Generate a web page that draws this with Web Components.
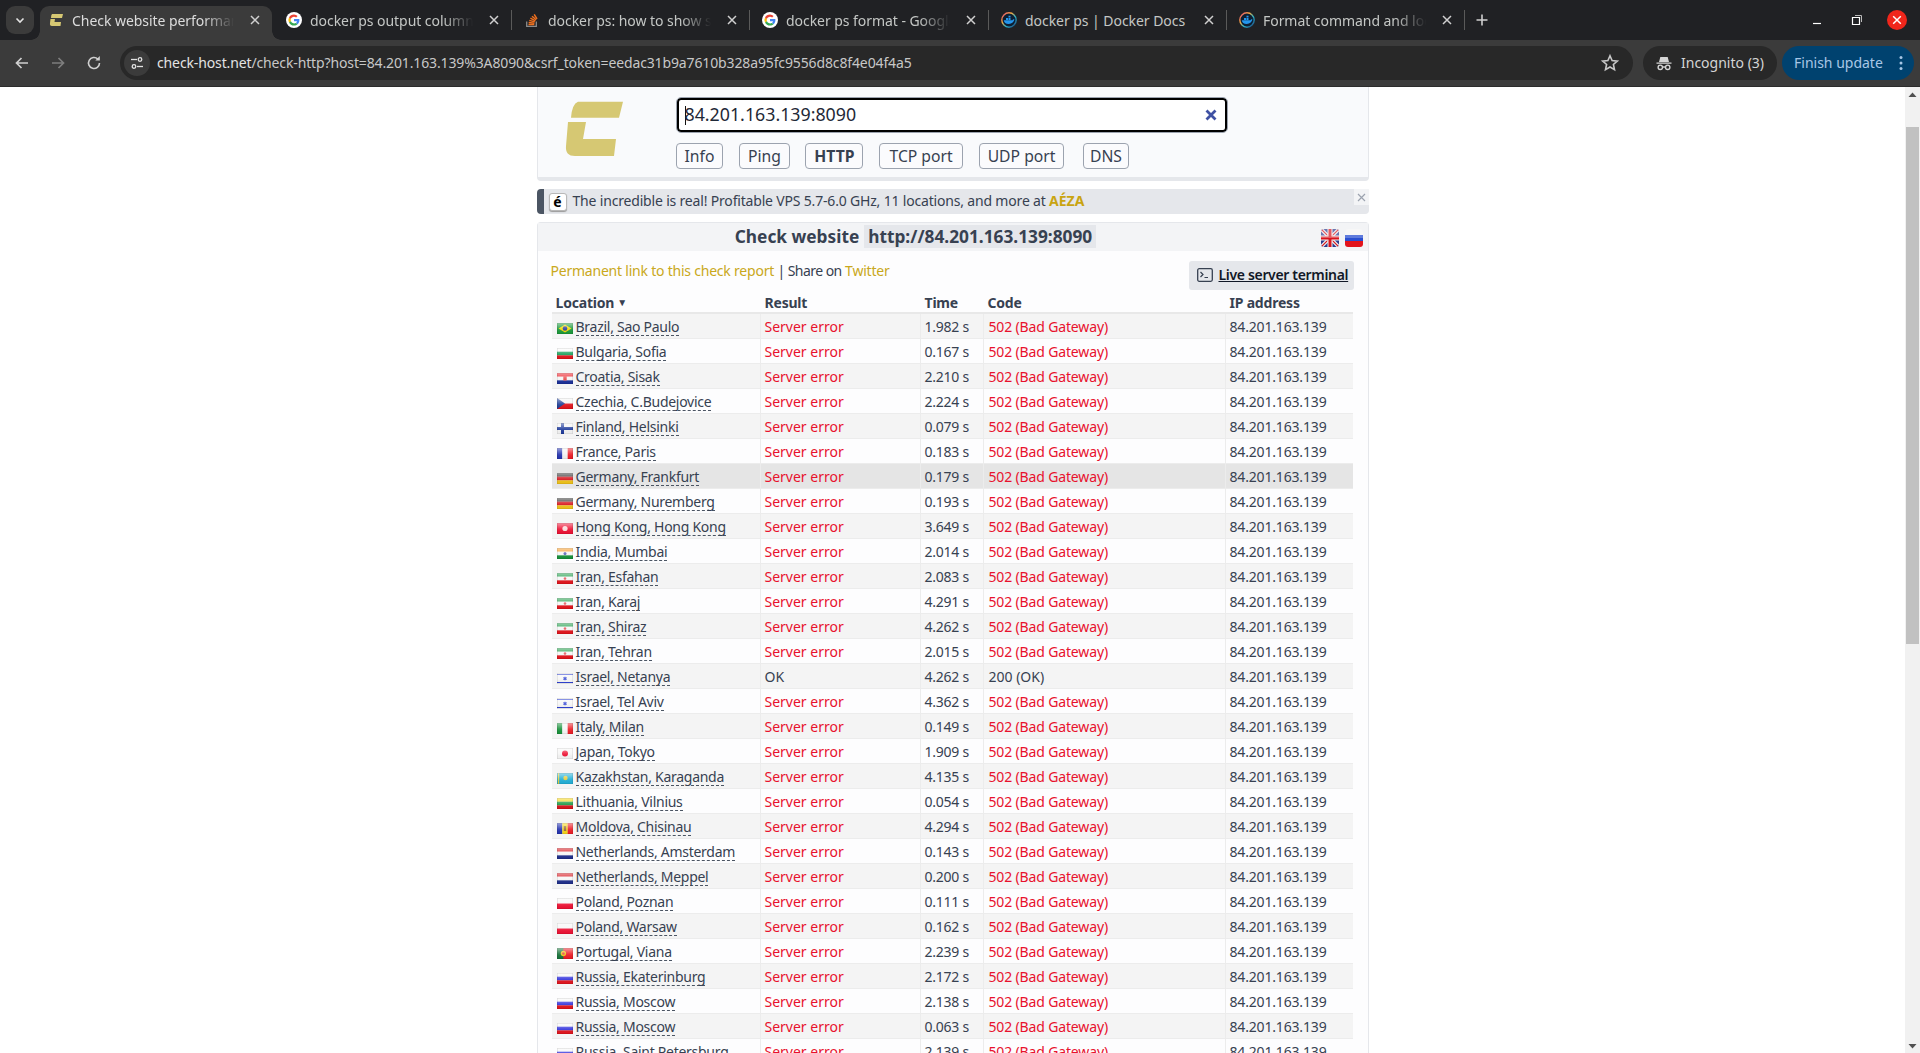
<!DOCTYPE html>
<html>
<head>
<meta charset="utf-8">
<title>Check website performance</title>
<style>
    html, body { margin: 0; height: 100%; overflow: hidden; background: #fff; }
    body { display: flex; flex-direction: column; font-family: "Noto Sans", "Open Sans", sans-serif; }
    .page { flex: 1; display: flex; min-height: 0; }
    .viewport { flex: 1; min-width: 0; overflow: hidden; display: flex; flex-direction: column; align-items: center; }
    .column { width: 832px; display: flex; flex-direction: column; flex: none; }
</style>
</head>
<body>
<browser-chrome></browser-chrome>
<div class="page">
    <div class="viewport">
        <div class="column">
            <check-form></check-form>
            <promo-banner></promo-banner>
            <check-results></check-results>
        </div>
    </div>
    <page-scrollbar></page-scrollbar>
</div>

<script>
const LOGO_PATH = "M23 0.7H68L64 16.7H16Q17 3 23 0.7Z M13 21H31L28 38H61L59 55H20Q10 55 11 45Z";

const FAVICONS = {
    check: `<svg width="16" height="16" viewBox="0 0 16 16"><path fill="#d6c873" d="M4 2H15L14 6H3Q3 3 4 2ZM2.500 7H7L6.500 10H13L12.500 14H4Q1.500 14 2 11Z"/></svg>`,
    google: `<svg width="16" height="16" viewBox="0 0 16 16"><circle cx="8" cy="8" r="8" fill="#fff"/><path fill="#4285f4" d="M13.400 8.200c0-.4 0-.8-.1-1.100H8v2.100h3a2.600 2.600 0 0 1-1.100 1.700l1.700 1.300c1.100-.9 1.800-2.300 1.800-4z"/><path fill="#34a853" d="M8 13.500c1.500 0 2.700-.5 3.600-1.300l-1.700-1.300c-.5.300-1.100.5-1.900.5-1.400 0-2.700-1-3.100-2.300L3 10.400c.9 1.900 2.800 3.100 5 3.100z"/><path fill="#fbbc05" d="M4.900 9.100a3.300 3.300 0 0 1 0-2.200L3 5.600a5.500 5.500 0 0 0 0 4.800z"/><path fill="#ea4335" d="M8 4.700c.8 0 1.500.3 2.100.8l1.500-1.500A5.400 5.400 0 0 0 8 2.500c-2.200 0-4.100 1.200-5 3.100l1.900 1.300C5.300 5.700 6.600 4.700 8 4.700z"/></svg>`,
    so: `<svg width="16" height="16" viewBox="0 0 16 16"><path fill="none" stroke="#8c8c8c" stroke-width="1.300" d="M2.700 9.500V14.300H12.300V9.500"/><g fill="none" stroke="#f0701e" stroke-width="1.500"><path d="M4.500 12.500H10.300"/><path d="M4.700 10.500L10.400 11.200"/><path d="M5.300 8.400L10.800 9.900"/><path d="M6.400 6.200L11.400 8.900"/><path d="M8 4.200L12.200 7.800"/><path d="M10.200 2.300L13 6.800"/></g></svg>`,
    docker: `<svg width="16" height="16" viewBox="0 0 16 16"><defs><linearGradient id="ring" x1="0" y1="0" x2="1" y2="1"><stop offset="0" stop-color="#e0457b"/><stop offset=".35" stop-color="#f0a63c"/><stop offset=".6" stop-color="#2cb5c9"/><stop offset="1" stop-color="#1a3d7a"/></linearGradient></defs><circle cx="8" cy="8" r="7.200" fill="#0d1f33" stroke="url(#ring)" stroke-width="1.400"/><path fill="#2496ed" d="M2.800 8.300H11.500C11.800 7.300 12.400 7 13.300 7.300C13 9.800 11 12 7.700 12C4.700 12 3 10.500 2.800 8.300ZM5 6H7V8H5ZM7.500 6H9.500V8H7.500ZM7.500 3.700H9.500V5.500H7.500Z"/></svg>`
};

const TABS = [
    { title: "Check website performance and", icon: "check", active: true, width: 232 },
    { title: "docker ps output columns", icon: "google", width: 238 },
    { title: "docker ps: how to show s", icon: "so", width: 238 },
    { title: "docker ps format - Google", icon: "google", width: 239 },
    { title: "docker ps | Docker Docs", icon: "docker", width: 238, nofade: true },
    { title: "Format command and log", icon: "docker", width: 238 },
];

class BrowserTab extends HTMLElement {
    connectedCallback() {
        const active = this.hasAttribute('active');
        this.attachShadow({ mode: 'open' }).innerHTML = `
        <style>
            :host {
                display: flex;
                align-items: center;
                flex: none;
                height: 34px;
                box-sizing: border-box;
                padding: 0 ${active ? 7 : 8}px 6px ${active ? 8 : 12}px;
                color: ${active ? '#dcdcdc' : '#c4c7c5'};
                font-size: 14px;
                position: relative;
                ${active ? 'background: #3b3b3b; border-radius: 9px 9px 0 0; margin-right: 2px;' : ''}
            }
            .icon { width: 16px; height: 16px; flex: none; margin: 0 8px 0 0; }
            .title {
                flex: 1;
                min-width: 0;
                white-space: nowrap;
                overflow: hidden;
                letter-spacing: -.05px;
                ${this.hasAttribute('nofade') ? '' : `-webkit-mask-image: linear-gradient(90deg, #000 78%, transparent 96%);`}
            }
            .close { flex: none; width: 20px; height: 20px; margin-left: 4px; }
            .sep { position: absolute; right: 0; top: 4px; width: 1px; height: 20px; background: #5a5a5a; display: ${this.hasAttribute('nosep') ? 'none' : 'block'}; }
            .flare { position: absolute; bottom: 0; width: 9px; height: 9px; display: ${active ? 'block' : 'none'}; }
            .flare.l { left: -9px; background: radial-gradient(circle at 0 0, transparent 8.500px, #3b3b3b 9px); }
            .flare.r { right: -9px; background: radial-gradient(circle at 100% 0, transparent 8.500px, #3b3b3b 9px); }
        </style>
        <div class="icon"><slot name="icon"></slot></div>
        <div class="title"><slot></slot></div>
        <svg class="close" viewBox="0 0 20 20"><path d="M6 6L14 14M14 6L6 14" stroke="#d0d0d0" stroke-width="1.500" fill="none"/></svg>
        <div class="sep"></div>
        <div class="flare l"></div>
        <div class="flare r"></div>`;
    }
}
customElements.define('browser-tab', BrowserTab);

class BrowserChrome extends HTMLElement {
    connectedCallback() {
        const tabs = TABS.map((t) => `
            <browser-tab style="width:${t.width}px" ${t.active ? 'active nosep' : ''} ${t.nofade ? 'nofade' : ''}>
                <span slot="icon">${FAVICONS[t.icon]}</span>${t.title}
            </browser-tab>`).join('');

        this.attachShadow({ mode: 'open' }).innerHTML = `
        <style>
            :host { display: block; flex: none; font-family: "Noto Sans", sans-serif; }
            .strip { height: 40px; background: #202124; display: flex; align-items: flex-end; padding-left: 6px; box-sizing: border-box; }
            .search {
                width: 28px; height: 28px; border-radius: 9px; background: #3b3b3b;
                display: flex; align-items: center; justify-content: center;
                align-self: flex-start; margin: 6px 6px 0 0; flex: none;
            }
            .tabs { display: flex; align-items: flex-end; flex: none; }
            .plus { width: 20px; height: 20px; margin: 0 0 10px 7px; flex: none; }
            .winctl { margin-left: auto; display: flex; align-items: center; align-self: flex-start; height: 40px; padding-right: 13px; }
            .winctl > * { flex: none; }
            .btn-gap1 { margin-right: 28px; }
            .btn-gap2 { margin-right: 24px; }
            .toolbar { height: 46px; background: #3b3b3b; border-bottom: 1px solid #2c2c2c; display: flex; align-items: center; padding: 0 6px 0 12px; }
            .nav { width: 20px; height: 20px; flex: none; }
            .omni {
                margin-left: 16px;
                width: 1513px; height: 34px; border-radius: 17px; background: #282828;
                display: flex; align-items: center; flex: none; color: #e3e3e3; font-size: 14px;
            }
            .tune { width: 26px; height: 26px; border-radius: 50%; background: #3b3b3b; margin-left: 4px; margin-right: 7px; display: flex; align-items: center; justify-content: center; flex: none; }
            .url { flex: 1; white-space: nowrap; letter-spacing: -.13px; padding-bottom: 2px; }
            .url span { color: #c7c7c7; }
            .star { width: 20px; height: 20px; margin-right: 13px; flex: none; }
            .pill { height: 34px; border-radius: 17px; display: flex; align-items: center; font-size: 14px; box-sizing: border-box; flex: none; }
            .pill span { padding-bottom: 2px; }
            .incog { background: #282828; color: #d4d4d4; margin-left: 10px; width: 134px; padding-left: 12px; gap: 8px; }
            .update { background: #00426f; color: #a8c7e6; margin-left: 5px; width: 132px; padding-left: 12px; }
            .dots { margin-left: auto; margin-right: 11px; }
        </style>
        <div class="strip">
            <div class="search"><svg width="14" height="14" viewBox="0 0 14 14"><path d="M3.500 5.500L7 9L10.500 5.500" stroke="#e3e3e3" stroke-width="1.600" fill="none"/></svg></div>
            <div class="tabs">${tabs}</div>
            <svg class="plus" viewBox="0 0 20 20"><path d="M10 4.500V15.500M4.500 10H15.500" stroke="#cfcfcf" stroke-width="1.600"/></svg>
            <div class="winctl">
                <svg class="btn-gap1" width="12" height="12" viewBox="0 0 12 12"><path d="M2 9.500H10" stroke="#fff" stroke-width="1.200"/></svg>
                <svg class="btn-gap2" width="12" height="12" viewBox="0 0 12 12"><path d="M1.500 3.500H8.500V10.500H1.500Z" fill="none" stroke="#fff" stroke-width="1.200"/><path d="M4 1.500H10.500V8" fill="none" stroke="#bbb" stroke-width="1"/></svg>
                <svg width="20" height="20" viewBox="0 0 20 20"><circle cx="10" cy="10" r="10" fill="#f0261b"/><path d="M6.200 6.200L13.800 13.800M13.800 6.200L6.200 13.800" stroke="#fff" stroke-width="1.500"/></svg>
            </div>
        </div>
        <div class="toolbar">
            <svg class="nav" viewBox="0 0 20 20"><path d="M16 10H4.500M9.500 5L4.500 10L9.500 15" stroke="#d0d0d0" stroke-width="1.700" fill="none"/></svg>
            <svg class="nav" style="margin-left:16px" viewBox="0 0 20 20"><path d="M4 10H15.500M10.500 5L15.500 10L10.500 15" stroke="#7e7e7e" stroke-width="1.700" fill="none"/></svg>
            <svg class="nav" style="margin-left:16px" viewBox="0 0 20 20"><path d="M15.500 10A5.500 5.500 0 1 1 13.800 6" stroke="#d0d0d0" stroke-width="1.600" fill="none"/><path d="M15.800 3V7.500H11.300" fill="#d0d0d0"/></svg>
            <div class="omni">
                <div class="tune"><svg width="14" height="14" viewBox="0 0 14 14"><g stroke="#e3e3e3" stroke-width="1.300" fill="none"><path d="M1 3.500H7"/><circle cx="10" cy="3.500" r="1.800"/><path d="M13 10.500H7"/><circle cx="4" cy="10.500" r="1.800"/></g></svg></div>
                <div class="url">check-host.net<span>/check-http?host=84.201.163.139%3A8090&amp;csrf_token=eedac31b9a7610b328a95fc9556d8c8f4e04f4a5</span></div>
                <svg class="star" viewBox="0 0 20 20"><path d="M10 2.800L12.100 7.600L17.300 8.100L13.400 11.500L14.500 16.600L10 14L5.500 16.600L6.600 11.500L2.700 8.100L7.900 7.600Z" fill="none" stroke="#c7c7c7" stroke-width="1.600"/></svg>
            </div>
            <div class="pill incog">
                <svg width="18" height="18" viewBox="0 0 18 18"><path d="M1.500 8.500H16.500V9.700H1.500ZM4 8L5.300 3H12.700L14 8Z" fill="#d4d4d4"/><g fill="none" stroke="#d4d4d4" stroke-width="1.400"><circle cx="5.300" cy="13.300" r="2.200"/><circle cx="12.700" cy="13.300" r="2.200"/><path d="M7.500 13H10.500"/></g></svg>
                <span>Incognito (3)</span>
            </div>
            <div class="pill update">
                <span>Finish update</span>
                <svg class="dots" width="4" height="16" viewBox="0 0 4 16"><g fill="#a8c7e6"><circle cx="2" cy="2.500" r="1.500"/><circle cx="2" cy="8" r="1.500"/><circle cx="2" cy="13.500" r="1.500"/></g></svg>
            </div>
        </div>`;
    }
}
customElements.define('browser-chrome', BrowserChrome);

class CheckForm extends HTMLElement {
    connectedCallback() {
        const buttons = ["Info", "Ping", "HTTP", "TCP port", "UDP port", "DNS"].map(name =>
            `<a class="${name === 'HTTP' ? 'on' : ''} ${name.split(' ')[0].toLowerCase()}">${name}</a>`).join('');

        this.attachShadow({ mode: 'open' }).innerHTML = `
        <style>
            :host {
                display: flex;
                box-sizing: border-box;
                height: 94px;
                background: #f9fafc;
                border: 1px solid #e5e7eb;
                border-top: 0;
                border-bottom-width: 4px;
                border-radius: 0 0 4px 4px;
                color: #374151;
            }
            .logo { width: 138px; flex: none; padding-top: 14px; box-sizing: border-box; }
            .logo svg { display: block; margin-left: 26px; }
            .main { padding-top: 10px; width: 552px; flex: none; }
            .input {
                box-sizing: border-box; height: 36px; width: 552px;
                border: 1px solid #9ca3af; border-radius: 5px; background: #fff;
                box-shadow: inset 0 0 0 2px #000;
                display: flex; align-items: center; padding: 0 9px 0 8px;
                font-size: 17.800px; color: #1f2937;
            }
            .value { padding-bottom: 2px; }
            .caret { width: 1px; height: 19px; background: #111; margin-right: -1px; }
            .clear { margin-left: auto; }
            .buttons { display: flex; gap: 15.500px; margin-top: 10px; }
            a {
                box-sizing: border-box; height: 26px; padding: 0 8px;
                border: 1px solid #9ca3af; border-radius: 4px;
                display: flex; align-items: center; font-size: 15.700px; color: #374151; background: #fbfbfd;
            }
            a.on { font-weight: 700; }
            a.tcp { padding: 0 9.500px; }
            a.dns { padding: 0 6px; margin-left: 3px; }
        </style>
        <div class="logo"><svg width="70" height="56" viewBox="0 0 70 56"><path fill="#d6c873" d="${LOGO_PATH}" transform="translate(-9 0)"/></svg></div>
        <div class="main">
            <div class="input"><span class="caret"></span><span class="value">84.201.163.139:8090</span>
                <svg class="clear" width="14" height="14" viewBox="0 0 14 14"><path d="M2.500 2.500L11.500 11.500M11.500 2.500L2.500 11.500" stroke="#3f51a3" stroke-width="2.800"/></svg>
            </div>
            <div class="buttons">${buttons}</div>
        </div>`;
    }
}
customElements.define('check-form', CheckForm);

class PromoBanner extends HTMLElement {
    connectedCallback() {
        this.attachShadow({ mode: 'open' }).innerHTML = `
        <style>
            :host {
                display: flex; align-items: center; position: relative;
                box-sizing: border-box; height: 25px; margin-top: 8px;
                background: #e5e7eb; border-left: 7px solid #4b5563; border-radius: 4px;
                font-size: 14px; color: #374151; white-space: nowrap;
            }
            .key {
                width: 18px; height: 18px; box-sizing: border-box; margin: 0 6px 0 5px;
                background: #fff; border: 1px solid #b8b8b8; border-radius: 3px;
                font-weight: 700; font-size: 14px; color: #000; display: flex; align-items: center; justify-content: center;
                box-shadow: 0 1px 1px #999;
            }
            .text { letter-spacing: -.18px; padding-bottom: 2px; }
            b { color: #c9a411; letter-spacing: 0; }
            .x {
                position: absolute; right: 0; top: 0; width: 15px; height: 16px;
                background: #f3f4f6; display: flex; align-items: center; justify-content: center;
            }
        </style>
        <span class="key">é</span>
        <span class="text">The incredible is real! Profitable VPS 5.7-6.0 GHz, 11 locations, and more at <b>AÉZA</b></span>
        <span class="x"><svg width="9" height="9" viewBox="0 0 9 9"><path d="M1 1L8 8M8 1L1 8" stroke="#9ca3af" stroke-width="1.200"/></svg></span>`;
    }
}
customElements.define('promo-banner', PromoBanner);

// stripes run top to bottom, extra is drawn over them
const FLAGS = {
    br: { s: ["#1a9a3a"], extra: `<path d="M8 1.500L14.500 5.500L8 9.500L1.500 5.500Z" fill="#f4d900"/><circle cx="8" cy="5.500" r="2.300" fill="#2a3f9d"/>` },
    bg: { s: ["#fafafa", "#18a05a", "#e3141c"] },
    hr: { s: ["#ee1c25", "#f4f4f4", "#1a2f9a"], extra: `<rect x="6.300" y="2.800" width="3.400" height="4.700" fill="#e84a4a"/>` },
    cz: { s: ["#f4f4f4", "#e3141c"], extra: `<path d="M0 0L8 5.500L0 11Z" fill="#1f3f99"/>` },
    fi: { s: ["#f4f4f4"], extra: `<path d="M0 5.500H16M5.500 0V11" stroke="#1f3b9c" stroke-width="3"/>` },
    fr: { v: ["#2433b0", "#f4f4f4", "#ee1c25"] },
    de: { s: ["#333", "#d8141c", "#f0c419"] },
    hk: { s: ["#ee1133"], extra: `<circle cx="8" cy="5.500" r="2.600" fill="#fbdada"/>` },
    in: { s: ["#f79c2a", "#f6f6f6", "#17923a"], extra: `<circle cx="8" cy="5.500" r="1.500" fill="#5560b5"/>` },
    ir: { s: ["#1f9e4a", "#f6f6f6", "#e3141c"], extra: `<circle cx="8" cy="5.500" r="1.300" fill="#e8555a"/>` },
    il: { s: ["#f6f6f6"], extra: `<path d="M0 1.500H16M0 9.500H16" stroke="#2c3fd0" stroke-width="1.200"/><path d="M8 3.200L10 6.700H6ZM8 7.800L6 4.300H10Z" fill="#3a4dd6"/>` },
    it: { v: ["#17923a", "#f6f6f6", "#ee1c25"] },
    jp: { s: ["#f6f6f6"], extra: `<circle cx="8" cy="5.500" r="3" fill="#ee1133"/>` },
    kz: { s: ["#22b0d8"], extra: `<circle cx="8.500" cy="5" r="2.200" fill="#e6cc3a"/><path d="M1.500 0V11" stroke="#e6cc3a" stroke-width="1.300"/>` },
    lt: { s: ["#f6d617", "#1b9a45", "#d8141c"] },
    md: { v: ["#2433b0", "#f6d617", "#ee1c25"], extra: `<rect x="6.800" y="3" width="2.400" height="5" fill="#9a6a3a"/>` },
    nl: { s: ["#d8141c", "#f6f6f6", "#1f2f8c"] },
    pl: { s: ["#f6f6f6", "#ee1133"] },
    pt: { s: ["#ee1c25"], extra: `<rect width="6.400" height="11" fill="#17733a"/><circle cx="6.400" cy="5.500" r="2.700" fill="#f0c419"/><circle cx="6.400" cy="5.500" r="1.300" fill="#e84a4a"/>` },
    ru: { s: ["#f6f6f6", "#3333dd", "#e3141c"] },
};

let glossId = 0;

function flagSvg(code, w = 16, h = 11) {
    const f = FLAGS[code];
    let body = '';
    if (f.v) {
        const bw = 16 / f.v.length;
        body = f.v.map((c, i) => `<rect x="${i * bw}" width="${bw + .1}" height="11" fill="${c}"/>`).join('');
    } else {
        const bh = 11 / f.s.length;
        body = f.s.map((c, i) => `<rect y="${i * bh}" width="16" height="${bh + .1}" fill="${c}"/>`).join('');
    }
    const id = `g${glossId++}`;
    return `<svg width="${w}" height="${h}" viewBox="0 0 16 11"><defs><linearGradient id="${id}" x1="0" y1="0" x2="0" y2="1"><stop offset="0" stop-color="#fff" stop-opacity=".55"/><stop offset=".55" stop-color="#fff" stop-opacity=".1"/><stop offset="1" stop-color="#000" stop-opacity=".02"/></linearGradient></defs>${body}${f.extra || ''}<rect width="16" height="11" fill="url(#${id})"/><rect x=".25" y=".25" width="15.500" height="10.500" fill="none" stroke="#000" stroke-opacity=".15" stroke-width=".5"/></svg>`;
}

const ROWS = [
    ["br", "Brazil, Sao Paulo", "1.982"],
    ["bg", "Bulgaria, Sofia", "0.167"],
    ["hr", "Croatia, Sisak", "2.210"],
    ["cz", "Czechia, C.Budejovice", "2.224"],
    ["fi", "Finland, Helsinki", "0.079"],
    ["fr", "France, Paris", "0.183"],
    ["de", "Germany, Frankfurt", "0.179"],
    ["de", "Germany, Nuremberg", "0.193"],
    ["hk", "Hong Kong, Hong Kong", "3.649"],
    ["in", "India, Mumbai", "2.014"],
    ["ir", "Iran, Esfahan", "2.083"],
    ["ir", "Iran, Karaj", "4.291"],
    ["ir", "Iran, Shiraz", "4.262"],
    ["ir", "Iran, Tehran", "2.015"],
    ["il", "Israel, Netanya", "4.262", true],
    ["il", "Israel, Tel Aviv", "4.362"],
    ["it", "Italy, Milan", "0.149"],
    ["jp", "Japan, Tokyo", "1.909"],
    ["kz", "Kazakhstan, Karaganda", "4.135"],
    ["lt", "Lithuania, Vilnius", "0.054"],
    ["md", "Moldova, Chisinau", "4.294"],
    ["nl", "Netherlands, Amsterdam", "0.143"],
    ["nl", "Netherlands, Meppel", "0.200"],
    ["pl", "Poland, Poznan", "0.111"],
    ["pl", "Poland, Warsaw", "0.162"],
    ["pt", "Portugal, Viana", "2.239"],
    ["ru", "Russia, Ekaterinburg", "2.172"],
    ["ru", "Russia, Moscow", "2.138"],
    ["ru", "Russia, Moscow", "0.063"],
    ["ru", "Russia, Saint Petersburg", "2.139"],
];

class CheckResults extends HTMLElement {
    connectedCallback() {
        const rows = ROWS.map((r, i) => {
            const ok = r[3];
            const cls = (i % 2 === 0 ? 'odd' : '') + (i === 6 ? ' hover' : '');
            return `<div class="row ${cls}">
                <div class="loc"><span class="flag">${flagSvg(r[0])}</span><span class="name">${r[1]}</span></div>
                <div class="${ok ? '' : 'err'}">${ok ? 'OK' : 'Server error'}</div>
                <div class="num">${r[2]} s</div>
                <div class="${ok ? '' : 'err code'}">${ok ? '200 (OK)' : '502 (Bad Gateway)'}</div>
                <div class="ip">84.201.163.139</div>
            </div>`;
        }).join('');

        this.attachShadow({ mode: 'open' }).innerHTML = `
        <style>
            :host {
                display: block; margin-top: 8px; background: #fdfdfe;
                border: 1px solid #e5e7eb; border-bottom: 0; border-radius: 4px 4px 0 0;
                color: #374151; font-size: 14px;
            }
            h1 {
                margin: 0; height: 28px; background: #f3f4f6; font-size: 17.300px; font-weight: 700; color: #374151;
                display: flex; align-items: center; justify-content: center; position: relative;
                padding: 0 74px 2px 0; box-sizing: border-box;
            }
            h1 code { font: inherit; background: #e5e7eb; padding: 0 4px; margin-left: 5px; }
            .langs { position: absolute; right: 5px; top: 6px; display: flex; gap: 6px; }
            .langs span { width: 18px; height: 18px; border-radius: 3px; overflow: hidden; display: block; }
            .links { display: flex; align-items: center; justify-content: space-between; height: 30px; margin: 9px 14px 0 13px; }
            .share { padding-bottom: 10px; letter-spacing: -.22px; }
            .share .mid { letter-spacing: -.55px; }
            .links a { color: #c9a820; }
            .terminal {
                display: flex; align-items: center; gap: 6px; height: 29px; width: 165px; box-sizing: border-box;
                background: #e5e7eb; border-radius: 3px; padding: 0 0 0 8px; font-weight: 600; color: #111827; white-space: nowrap;
            }
            .terminal span { text-decoration: underline; letter-spacing: -.33px; padding-bottom: 1px; }
            .table { margin: 0 15px 0 14px; }
            .row {
                display: grid; grid-template-columns: 208px 160px 63px 242px 1fr; height: 25px;
                box-sizing: border-box; border-bottom: 1px solid #ececec; align-items: stretch; white-space: nowrap;
            }
            .row.odd { background: #f4f4f4; }
            .row.hover { background: #e5e5e5; }
            .row > div { display: flex; align-items: center; padding-left: 4px; border-left: 1px solid #ececec; }
            .row > div:first-child { border-left: 0; padding-left: 5px; }
            .row > div:nth-child(4) { padding-left: 5px; }
            .head { font-weight: 700; height: 24px; border-bottom: 2px solid #e8e8e8; letter-spacing: -.2px; }
            .head > div { border-left: 0 !important; padding-top: 2px; padding-left: 5px; }
            .head > div:first-child { padding-left: 4px; }
            .err { color: #e8112d; }
            .code { letter-spacing: -.15px; }
            .num { letter-spacing: -.25px; }
            .ip { letter-spacing: -.17px; }
            .flag { display: block; width: 16px; height: 11px; margin: 4px 3px 0 0; flex: none; }
            .flag svg { display: block; }
            .name { border-bottom: 1px dashed #4b5563; line-height: 16px; padding-top: 3px; letter-spacing: -.27px; }
            .tri { font-size: 10px; margin-left: 3px; }
        </style>
        <h1>Check website <code>http://84.201.163.139:8090</code>
            <div class="langs"><span id="en"></span><span id="ru"></span></div>
        </h1>
        <div class="links">
            <div class="share"><a>Permanent link to this check report</a> <span class="mid">| Share on</span> <a>Twitter</a></div>
            <div class="terminal">
                <svg width="16" height="14" viewBox="0 0 16 14"><rect x=".7" y=".7" width="14.600" height="12.600" rx="1.500" fill="none" stroke="#374151" stroke-width="1.300"/><path d="M3.500 4L6 6.500L3.500 9M7.500 9.500H11" fill="none" stroke="#374151" stroke-width="1.200"/></svg>
                <span>Live server terminal</span>
            </div>
        </div>
        <div class="table">
            <div class="row head">
                <div>Location<span class="tri">▼</span></div><div>Result</div><div>Time</div><div>Code</div><div>IP address</div>
            </div>
            ${rows}
        </div>`;

        this.shadowRoot.getElementById('en').innerHTML = `<svg width="18" height="18" viewBox="0 0 18 18"><rect width="18" height="18" fill="#2a3a8c"/><path d="M0 0L18 18M18 0L0 18" stroke="#eee" stroke-width="3.500"/><path d="M0 0L18 18M18 0L0 18" stroke="#d8141c" stroke-width="1.200"/><path d="M9 0V18M0 9H18" stroke="#eee" stroke-width="5"/><path d="M9 0V18M0 9H18" stroke="#d8141c" stroke-width="3"/><rect width="18" height="9" fill="#fff" fill-opacity=".3"/></svg>`;
        this.shadowRoot.getElementById('ru').innerHTML = `<svg width="18" height="18" viewBox="0 0 18 18"><rect width="18" height="6" fill="#f4f4f4"/><rect y="6" width="18" height="6" fill="#2a4fd0"/><rect y="12" width="18" height="6" fill="#e3141c"/><rect width="18" height="9" fill="#fff" fill-opacity=".25"/></svg>`;
    }
}
customElements.define('check-results', CheckResults);

class PageScrollbar extends HTMLElement {
    connectedCallback() {
        this.attachShadow({ mode: 'open' }).innerHTML = `
        <style>
            :host { display: flex; flex-direction: column; flex: none; width: 15px; background: #f1f1f1; align-items: center; }
            .arrow { flex: none; height: 15px; width: 15px; display: flex; align-items: center; justify-content: center; }
            .thumb { width: 13px; height: 517px; margin-top: 25px; background: #c1c1c1; flex: none; }
            .spacer { flex: 1; }
        </style>
        <div class="arrow"><svg width="9" height="6" viewBox="0 0 9 6"><path d="M4.500 .5L8.500 5H.5Z" fill="#505050"/></svg></div>
        <div class="thumb"></div>
        <div class="spacer"></div>
        <div class="arrow"><svg width="9" height="6" viewBox="0 0 9 6"><path d="M4.500 5.500L8.500 1H.5Z" fill="#505050"/></svg></div>`;
    }
}
customElements.define('page-scrollbar', PageScrollbar);
</script>
</body>
</html>
